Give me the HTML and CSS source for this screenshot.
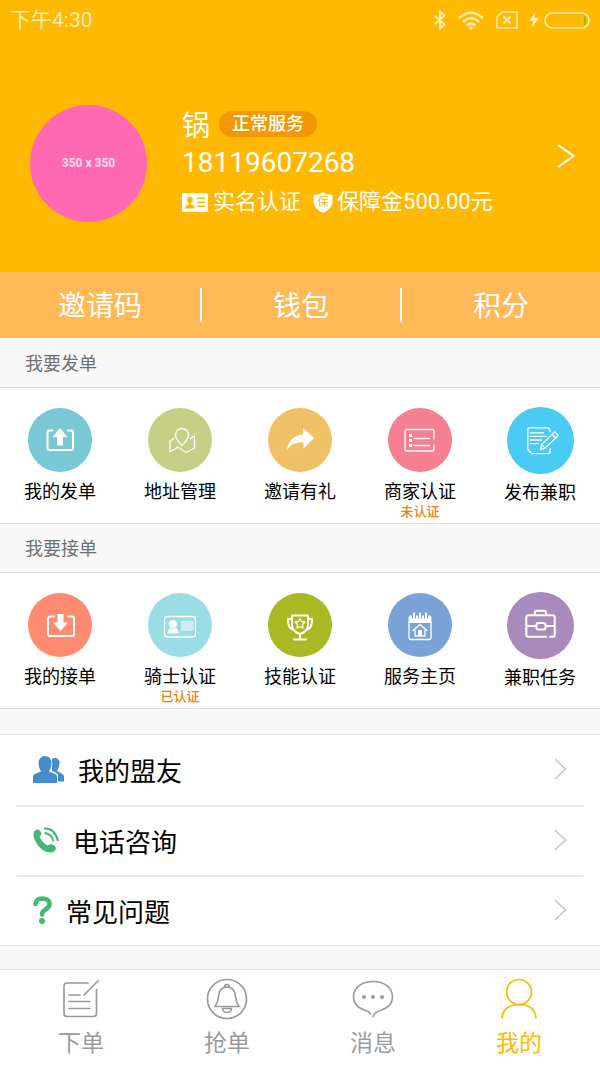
FILE: index.html
```html
<!DOCTYPE html>
<html lang="zh-CN">
<head>
<meta charset="utf-8">
<meta name="viewport" content="width=device-width, initial-scale=1">
<title>我的</title>
<link rel="stylesheet" href="styles.css">
</head>
<body>
<div class="app">
  <header class="top">
    <div class="status">
      <time>下午4:30</time>
      <div class="status-icons">
        <svg width="14" height="20" viewBox="0 0 14 20" fill="none" stroke="currentColor" stroke-width="2"><path d="M1.500 5.500l10 9L7 18.500v-17l4.500 4-10 9"/></svg>
        <svg class="wifi" width="26" height="19" viewBox="0 0 26 19" fill="none" stroke="currentColor" stroke-width="2.500"><path d="M1 7Q13-3.500 25 7M5 11Q13 3.500 21 11M8.800 14.500Q13 10.500 17.200 14.500"/><circle cx="13" cy="17" r="1.800" fill="currentColor" stroke="none"/></svg>
        <svg class="sim" width="22" height="18" viewBox="0 0 22 18" fill="none" stroke="currentColor" stroke-width="1.500"><path d="M6 1h15v16H1V6z"/><path d="M7.500 5.500l7 7M14.500 5.500l-7 7" stroke-width="2"/></svg>
        <svg class="bolt" width="10" height="16" viewBox="0 0 10 16" fill="currentColor"><path d="M6.500 0L0 9h4L2.500 16 10 6H5.500z"/></svg>
        <svg width="46" height="17" viewBox="0 0 46 17" fill="none" stroke="currentColor" stroke-width="1.700"><rect x="1" y="1" width="44" height="15" rx="7.500"/><path d="M41 4.500v8" stroke="#8fc400" stroke-width="2"/></svg>
      </div>
    </div>
    <a class="profile" href="#profile">
      <span class="avatar">350 x 350</span>
      <span class="info">
        <span class="line name">锅<span class="pill">正常服务</span></span>
        <span class="line phone">18119607268</span>
        <span class="line badges">
          <svg width="26" height="19" viewBox="0 0 26 19"><rect width="26" height="19" rx="1.500" fill="#fff"/><g fill="#ffb900"><ellipse cx="8" cy="7" rx="2.800" ry="3.200"/><path d="M7 9h2v2l3.500 2v2.500h-9V13L7 11z"/><path d="M15 4.500h8V6h-8zM15 8.500h8V10h-8zM15 12.500h8V14h-8z"/></g></svg>
          <span class="real">实名认证</span>
          <svg width="20" height="21" viewBox="0 0 20 21"><path d="M10 0l3 2 6.500 1v7.500Q19 16.500 10 21 1 16.500.5 10.500V3L7 2z" fill="#fff"/><text class="shield-text" x="10" y="14" text-anchor="middle">保</text></svg>
          <span class="deposit">保障金500.00元</span>
        </span>
      </span>
      <svg class="go" width="18" height="24" viewBox="0 0 18 24" fill="none" stroke="#fff" stroke-width="2"><path d="M1 1l15.500 11L1 23"/></svg>
    </a>
  </header>

  <nav class="stats">
    <a href="#code">邀请码</a>
    <a href="#wallet">钱包</a>
    <a href="#points">积分</a>
  </nav>

  <h2 class="section-title">我要发单</h2>
  <div class="grid">
    <a class="item" href="#sent">
      <svg class="disc teal" viewBox="0 0 64 64"><path class="ln2" d="M24.500 22.500h-3a2 2 0 0 0-2 2v15.500a2 2 0 0 0 2 2h21.500a2 2 0 0 0 2-2V24.500a2 2 0 0 0-2-2h-3"/><path class="solid" d="M32 20l7.500 9H35v8.500h-6V29h-4.500z"/></svg>
      <span>我的发单</span>
    </a>
    <a class="item" href="#address">
      <svg class="disc olive" viewBox="0 0 64 64"><path class="ln" d="M34 37.500c-3.500-4-6.500-6.500-6.500-10.500a6.500 6.500 0 0 1 13 0c0 4-3 6.500-6.500 10.500zM26 30l-4 3.500v10.500l8-5 8 5.500 8.500-4.500V28l-4 2.500"/></svg>
      <span>地址管理</span>
    </a>
    <a class="item" href="#invite">
      <svg class="disc amber" viewBox="0 0 64 64"><path class="solid" d="M35 20l11 10-10.500 10.500v-6C27.500 34 23 36 19 42c1-8 6-15 16-15.500z"/></svg>
      <span>邀请有礼</span>
    </a>
    <a class="item" href="#merchant">
      <svg class="disc rose" viewBox="0 0 64 64"><path class="ln" d="M46 31v-7.500a2 2 0 0 0-2-2H19a2 2 0 0 0-2 2V41a2 2 0 0 0 2 2h25a2 2 0 0 0 2-2v-4M26 30.500h15.500M26 37.500h15.500"/><path class="solid" d="M21 26h3v3h-3zM21 31h3v3h-3zM21 36h3v3h-3z"/></svg>
      <span>商家认证</span>
      <small>未认证</small>
    </a>
    <a class="item wide" href="#post">
      <svg class="disc sky" viewBox="0 0 66 66"><path class="ln" d="M42.500 41v3a2 2 0 0 1-2 2h-16l-4-4V22a1.500 1.500 0 0 1 1.500-1.500h17.500q3 0 3 4M23 25.500h13M23 29h15.500M23 32.500h11M23 36h8"/><path class="ln" d="M33 42l1-5 13-12.500 3.500 3.500-13 12.500zM44.500 27l3.500 3.500M34 37l3.500 3.500"/></svg>
      <span>发布兼职</span>
    </a>
  </div>

  <h2 class="section-title">我要接单</h2>
  <div class="grid">
    <a class="item" href="#taken">
      <svg class="disc coral" viewBox="0 0 64 64"><path class="ln2" d="M26 23.500h-4a2 2 0 0 0-2 2V41a2 2 0 0 0 2 2h22a2 2 0 0 0 2-2V25.500a2 2 0 0 0-2-2h-4"/><path class="solid" d="M29.500 21h6v8.500h4.500L32.500 38 25 29.500h4.500z"/></svg>
      <span>我的接单</span>
    </a>
    <a class="item" href="#knight">
      <svg class="disc aqua" viewBox="0 0 64 64"><rect class="ln" x="16.500" y="23.500" width="31" height="20.500" rx="3"/><circle class="solid" cx="25" cy="31" r="4"/><path class="solid" d="M19.500 40.500q0-5 3.500-5.500l2 1 2-1q3.500.5 3.500 5.500z"/><rect x="33" y="28" width="12.500" height="10" fill="#fff" opacity=".5"/></svg>
      <span>骑士认证</span>
      <small>已认证</small>
    </a>
    <a class="item" href="#skill">
      <svg class="disc lime" viewBox="0 0 64 64"><path class="ln2" d="M24 22.500h16V33q-1 6-8 8-7-2-8-8zM24 26h-4q-.5 9 5.500 11M40 26h4q.5 9-5.500 11M32 41v4.500M26 46.500h12"/><path class="ln" d="M32 25.500l1.500 3 3.500.5-2.500 2.500.500 3.500-3-1.500-3 1.500.500-3.500-2.500-2.500 3.500-.5z"/></svg>
      <span>技能认证</span>
    </a>
    <a class="item" href="#home">
      <svg class="disc blue" viewBox="0 0 64 64"><path class="ln" d="M21 30v14.500a2 2 0 0 0 2 2h18a2 2 0 0 0 2-2V30"/><path class="solid" d="M20.500 30v-5.500a2 2 0 0 1 2-2h19a2 2 0 0 1 2 2V30z"/><path d="M26 20v5.500M32 20v5.500M38 20v5.500" stroke="#79a3d6" stroke-width="4"/><path class="ln2" d="M26 20.500V25M32 20.500V25M38 20.500V25"/><path class="ln" d="M25 37.500l7-6 7 6M27 36.500V43h10v-6.500"/><path class="solid" d="M30 37h4v6h-4z"/></svg>
      <span>服务主页</span>
    </a>
    <a class="item wide" href="#tasks">
      <svg class="disc violet" viewBox="0 0 66 66"><path class="ln2" d="M38.500 44H21a2 2 0 0 1-2-2V25a2 2 0 0 1 2-2h24a2 2 0 0 1 2 2v17a2 2 0 0 1-2 2h-2.500M27.500 22.500v-2a2 2 0 0 1 2-2h7a2 2 0 0 1 2 2v2M19 33.500h9.500M38 33.500h9"/><rect class="ln2" x="29" y="30.500" width="9" height="6.500" rx="2"/></svg>
      <span>兼职任务</span>
    </a>
  </div>

  <div class="list">
    <a class="row" href="#friends">
      <svg width="31" height="27" viewBox="0 0 31 27" fill="#468bcb"><path d="M19 2.500q6-2 7.500 3 .5 5-2.500 9.500l4.500 2.500q2.500 1 2.500 3V25.500h-6V20q0-3-6-5z"/><path d="M0 27v-6q0-2.500 3-3.500l5-2Q6 12 5.500 8 5.500 0 12 0t6.500 8q-.5 4-2.500 7.500l5 2q3 1 3 3.500v6z" stroke="#fff" stroke-width="1.500" paint-order="stroke"/></svg>
      <span>我的盟友</span>
      <svg class="chev" width="13" height="22" viewBox="0 0 13 22"><path d="M1 1l10.500 10L1 21"/></svg>
    </a>
    <a class="row" href="#call">
      <svg width="26" height="26" viewBox="0 0 26 26"><path fill="#43b774" d="M1 4.500Q3 2 5 2.500q3 1 3.500 4.500L6.500 10q2.500 5 8 8.500l3.500-1.500q4 1 5 4-.5 3-4 4.500Q8 26 2 13.500-.5 8 1 4.500z"/><path d="M11 1.500q11-.5 14 12.500M11.500 6q7 .5 9 8.500" fill="none" stroke="#43b774" stroke-width="2"/></svg>
      <span>电话咨询</span>
      <svg class="chev" width="13" height="22" viewBox="0 0 13 22"><path d="M1 1l10.500 10L1 21"/></svg>
    </a>
    <a class="row" href="#faq">
      <svg width="19" height="28" viewBox="0 0 19 28"><path d="M2.500 8Q3 2.500 9.500 2.500 16.500 3 16.500 8q0 3-4 5.500-3.500 2-3.500 5" fill="none" stroke="#43b774" stroke-width="4.500" stroke-linecap="round"/><circle cx="9" cy="25" r="3" fill="#43b774"/></svg>
      <span>常见问题</span>
      <svg class="chev" width="13" height="22" viewBox="0 0 13 22"><path d="M1 1l10.500 10L1 21"/></svg>
    </a>
  </div>

  <nav class="tabs">
    <a href="#order">
      <svg width="42" height="42" viewBox="0 0 42 42"><path d="M28 5H7a3 3 0 0 0-3 3v27.500a3 3 0 0 0 3 3h26.500a3 3 0 0 0 3-3V11.500M38 3L24 17M9 17h11M9 23.500h21M9 30.500h21"/></svg>
      <span>下单</span>
    </a>
    <a href="#grab">
      <svg width="42" height="42" viewBox="0 0 42 42"><circle cx="21" cy="21" r="19.500"/><path d="M18.500 9a2.500 2.500 0 0 1 5 0M9 28.500q3-4 3.500-10 .5-9 8.500-9.500 8 .5 8.500 9.500.5 6 3.500 10zM16.500 30.500h9q-.5 4-4.500 4t-4.500-4z"/></svg>
      <span>抢单</span>
    </a>
    <a href="#messages">
      <svg width="42" height="42" viewBox="0 0 42 42"><path d="M18.500 36q-1-2.500-5-3.500C6 30 1.500 25 1.500 19 1.500 9.500 10 3.500 21 3.500S40.500 9.500 40.500 19c0 6-4.500 11-12 13.500-4 1-6 3-7.500 6"/><g fill="currentColor" stroke="none"><circle cx="12" cy="19" r="2"/><circle cx="21" cy="19" r="2"/><circle cx="30" cy="19" r="2"/></g></svg>
      <span>消息</span>
    </a>
    <a class="active" href="#me">
      <svg width="42" height="42" viewBox="0 0 42 42"><circle cx="21" cy="14" r="12.500"/><path d="M4 40Q5 27 21 26.500 37 27 38 40"/></svg>
      <span>我的</span>
    </a>
  </nav>
</div>
</body>
</html>
```
FILE: styles.css
```css
* { box-sizing: border-box; }
body {
  margin: 0;
  background: #f9f9f9;
  color: #000;
  font-family: Roboto, "Noto Sans CJK SC", sans-serif;
}
a { color: inherit; text-decoration: none; }
svg { display: block; flex: none; }
.app { display: flex; flex-direction: column; min-height: 100vh; }

.top { background: #ffb900; color: #fff; }
.status {
  display: flex;
  justify-content: space-between;
  align-items: center;
  height: 40px;
  padding: 0 10px;
  font-size: 21px;
  line-height: 42px;
  color: #ffebb4;
}
.status-icons { display: flex; align-items: center; }
.wifi { margin-left: 11px; }
.sim { margin: 0 11px 0 12px; }
.bolt { margin-right: 5px; }

.profile { display: flex; align-items: center; padding: 65px 25px 50px 30px; }
.avatar {
  flex: none;
  width: 117px;
  height: 117px;
  border-radius: 50%;
  background: #ff69b4;
  color: #f5dfea;
  font-size: 12px;
  font-weight: 700;
  line-height: 117px;
  text-align: center;
}
.info { flex: 1; align-self: flex-start; margin-left: 35px; }
.line { display: flex; align-items: center; height: 39px; white-space: nowrap; font-size: 28px; }
.name { height: 38px; }
.pill {
  margin-left: 9px;
  padding: 0 13px;
  border-radius: 13px;
  background: #f39800;
  font-size: 18px;
  font-weight: 500;
  line-height: 26px;
}
.badges { height: 34px; font-size: 22px; }
.badges svg { margin-top: 6px; }
.real { margin: 0 12px 0 5px; }
.deposit { margin-left: 4px; }
.shield-text { font: 11px "Noto Sans CJK SC", sans-serif; fill: #ffb900; }
.go { margin-bottom: 16px; }

.stats { display: grid; grid-template-columns: repeat(3, 1fr); padding: 16px 0; background: #ffb957; color: #fff; }
.stats a { height: 34px; font-size: 28px; line-height: 38px; text-align: center; }
.stats a + a { border-left: 2px solid #fff; }

.section-title {
  margin: 0;
  padding: 2px 25px 0;
  border-bottom: 1px solid #ddd;
  font-size: 18px;
  font-weight: 400;
  line-height: 47px;
  color: #707070;
}
.grid {
  display: grid;
  grid-template-columns: repeat(5, 1fr);
  min-height: 136px;
  padding-top: 20px;
  border-bottom: 1px solid #ddd;
  background: #fff;
}
.grid + .section-title { line-height: 46px; }
.item { display: flex; flex-direction: column; align-items: center; font-size: 18px; line-height: 26px; }
.item span { margin-top: 7px; }
.item small { margin-top: -1px; font-size: 13px; font-weight: 500; line-height: 16px; color: #f08010; }
.disc { width: 64px; height: 64px; border-radius: 50%; }
.wide { margin-top: -1px; }
.wide .disc { width: 67px; height: 67px; }
.wide span { margin-top: 6px; }
.ln, .ln2 { fill: none; stroke: #fff; stroke-width: 1.3; stroke-linejoin: round; stroke-linecap: round; }
.ln2 { stroke-width: 2; }
.solid { fill: #fff; }
.teal { background: #79c8d5; }
.olive { background: #c5d086; }
.amber { background: #f0c167; }
.rose { background: #f48092; }
.sky { background: #49cbf3; }
.coral { background: #ff8b70; }
.aqua { background: #9adde4; }
.lime { background: #a9b923; }
.blue { background: #79a3d6; }
.violet { background: #a98abd; }

.list { margin-top: 25px; padding: 0 17px; border: solid #ddd; border-width: 1px 0; background: #fff; }
.row { display: flex; align-items: center; height: 70px; padding: 0 16px 2px; font-size: 26px; }
.row + .row { border-top: 2px solid #e8e8e8; }
.row span { margin-left: 14px; }
.chev { margin-left: auto; fill: none; stroke: #c4c4c4; stroke-width: 1.5; }

.tabs {
  display: grid;
  grid-template-columns: repeat(4, 1fr);
  margin-top: auto;
  padding: 8px 8px 6px;
  border-top: 1px solid #ddd;
  background: #fff;
  color: #9b9b9b;
}
.tabs a { display: flex; flex-direction: column; align-items: center; gap: 7px; font-size: 23px; line-height: 34px; }
.tabs svg { fill: none; stroke: currentColor; stroke-width: 1.7; stroke-linecap: round; }
.tabs .active { color: #ffb900; }
```
